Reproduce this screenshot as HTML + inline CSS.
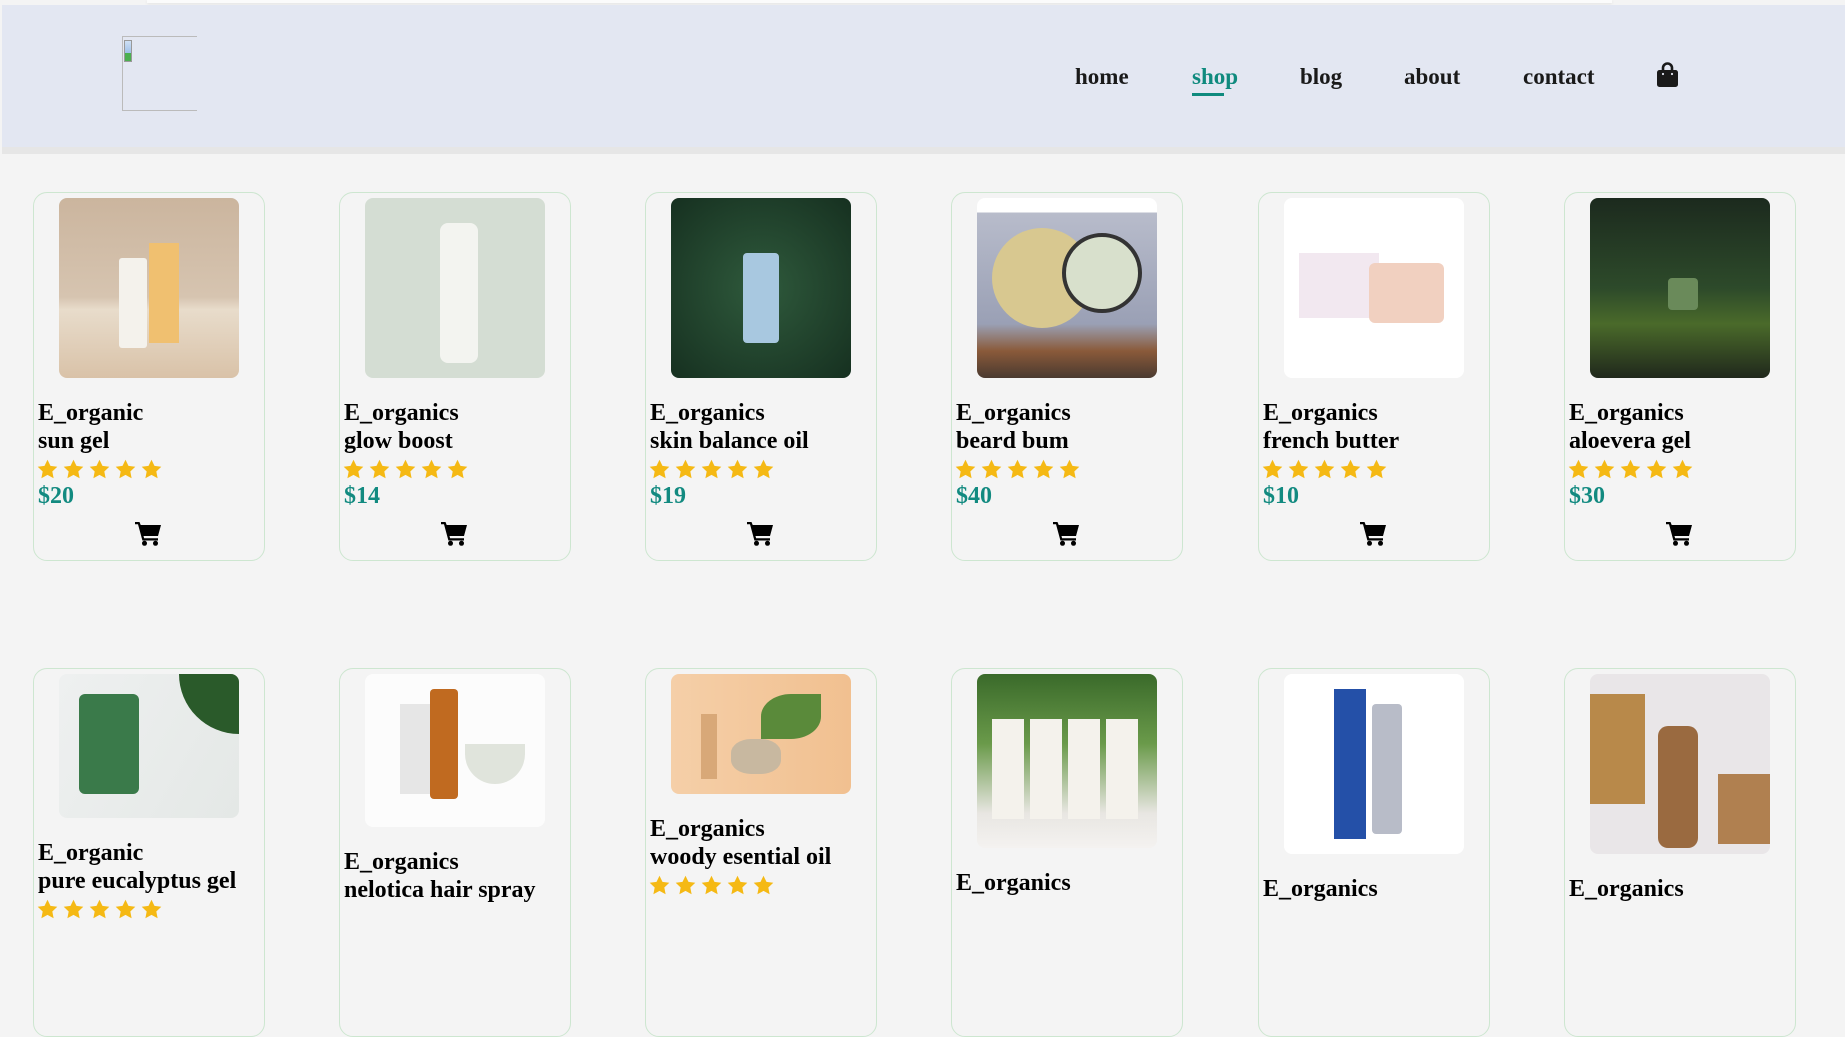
<!DOCTYPE html>
<html><head><meta charset="utf-8"><style>
*{box-sizing:border-box;margin:0;padding:0}
body{width:1845px;height:899px;overflow:hidden;background:#f4f4f4;font-family:"Liberation Serif",serif;position:relative}
.topbar{position:absolute;left:147px;top:0;width:1465px;height:3px;background:#fbfbfb;box-shadow:0 1px 3px rgba(0,0,0,.08)}
header{position:absolute;left:2px;top:5px;width:1843px;height:142px;background:#e3e7f2}
.strip{position:absolute;left:2px;top:147px;width:1843px;height:7px;background:#e6e6e6}
.logo{position:absolute;left:122px;top:36px;width:75px;height:75px;border:1px solid #bbb;border-right:none}
.logo i{position:absolute;left:1px;top:3px;width:8px;height:22px;background:linear-gradient(#cfe0f5,#9fc0e8 60%,#4caf50 60%);border:1px solid #999}
nav a{position:absolute;top:63px;font-size:23px;font-weight:bold;color:#1a1a1a;text-decoration:none;line-height:28px}
nav a.act{color:#0f8a7e}
.ul{position:absolute;left:1192px;top:93px;width:32px;height:3px;background:#0f8a7e}
.card{position:absolute;width:232px;height:369px;border:1px solid #cde6d0;border-radius:14px;padding:5px 0 0 4px}
.img{width:180px;margin-left:21px;border-radius:8px;margin-bottom:22px}
.t{font-size:24px;font-weight:bold;line-height:27.6px;color:#000}
.stars{height:28px;display:flex;align-items:center;gap:5px;margin-left:-1px}
.p{font-size:24px;font-weight:bold;line-height:27.6px;color:#128a80}
.cart{position:absolute;left:101px;top:328px}
</style></head><body>
<div class="topbar"></div>
<header></header><div class="strip"></div>
<div class="logo"><i></i></div>
<nav>
<a style="left:1075px">home</a>
<a class="act" style="left:1192px">shop</a>
<a style="left:1300px">blog</a>
<a style="left:1404px">about</a>
<a style="left:1523px">contact</a>
</nav>
<div class="ul"></div>
<svg style="position:absolute;left:1657px;top:62px" width="21" height="25" viewBox="0 0 21 25"><path d="M6 9V6a4.5 4.5 0 0 1 9 0v3" fill="none" stroke="#1a1a1a" stroke-width="2.6"/><rect x="0" y="8" width="21" height="17" rx="2.5" fill="#1a1a1a"/><circle cx="6" cy="12" r="1.1" fill="#e3e7f2"/><circle cx="15" cy="12" r="1.1" fill="#e3e7f2"/></svg>

<svg width="0" height="0" style="position:absolute"><defs>
<symbol id="st" viewBox="0 0 24 24"><path d="M12 0.8l3.4 7.1 7.8 1-5.7 5.4 1.5 7.7L12 18.2l-7 3.8 1.5-7.7L0.8 8.9l7.8-1z" fill="#f5b914"/></symbol>
<symbol id="ct" viewBox="0 0 26 25"><path d="M0 1h4.5l1.2 3H26l-3 11H8.5l.6 2.2H23v2.3H7.4L3 3.3H0z" fill="#000"/><circle cx="9.5" cy="22.3" r="2.5" fill="#000"/><circle cx="20.5" cy="22.3" r="2.5" fill="#000"/></symbol>
</defs></svg>

<!-- row 1 -->
<div class="card" style="left:33px;top:192px"><div class="img" style="height:180px;background:linear-gradient(#cbb59e 0%,#d6c4b0 55%,#e8dccb 62%,#d9c2a8 100%);position:relative"><div style="position:absolute;left:60px;top:60px;width:28px;height:90px;background:#f4f2ec;border-radius:3px"></div><div style="position:absolute;left:90px;top:45px;width:30px;height:100px;background:#f0c070"></div></div><div class="t">E_organic<br>sun gel</div><div class="stars"><svg width="21" height="21"><use href="#st"/></svg><svg width="21" height="21"><use href="#st"/></svg><svg width="21" height="21"><use href="#st"/></svg><svg width="21" height="21"><use href="#st"/></svg><svg width="21" height="21"><use href="#st"/></svg></div><div class="p">$20</div><svg class="cart" width="26" height="25"><use href="#ct"/></svg></div>

<div class="card" style="left:339px;top:192px"><div class="img" style="height:180px;background:#d4ddd3;position:relative"><div style="position:absolute;left:75px;top:25px;width:38px;height:140px;background:#f3f4f0;border-radius:8px"></div></div><div class="t">E_organics<br>glow boost</div><div class="stars"><svg width="21" height="21"><use href="#st"/></svg><svg width="21" height="21"><use href="#st"/></svg><svg width="21" height="21"><use href="#st"/></svg><svg width="21" height="21"><use href="#st"/></svg><svg width="21" height="21"><use href="#st"/></svg></div><div class="p">$14</div><svg class="cart" width="26" height="25"><use href="#ct"/></svg></div>

<div class="card" style="left:645px;top:192px"><div class="img" style="height:180px;background:radial-gradient(circle at 50% 50%,#2f5a3c,#163020);position:relative"><div style="position:absolute;left:72px;top:55px;width:36px;height:90px;background:#a8c8e0;border-radius:4px"></div></div><div class="t">E_organics<br>skin balance oil</div><div class="stars"><svg width="21" height="21"><use href="#st"/></svg><svg width="21" height="21"><use href="#st"/></svg><svg width="21" height="21"><use href="#st"/></svg><svg width="21" height="21"><use href="#st"/></svg><svg width="21" height="21"><use href="#st"/></svg></div><div class="p">$19</div><svg class="cart" width="26" height="25"><use href="#ct"/></svg></div>

<div class="card" style="left:951px;top:192px"><div class="img" style="height:180px;background:linear-gradient(#fff 0%,#fff 8%,#b8bccb 8%,#9aa0b5 70%,#8a5a3a 85%,#4a3a30 100%);position:relative"><div style="position:absolute;left:15px;top:30px;width:100px;height:100px;background:#d8c890;border-radius:50%"></div><div style="position:absolute;left:85px;top:35px;width:80px;height:80px;background:#d8e0cc;border-radius:50%;border:4px solid #333"></div></div><div class="t">E_organics<br>beard bum</div><div class="stars"><svg width="21" height="21"><use href="#st"/></svg><svg width="21" height="21"><use href="#st"/></svg><svg width="21" height="21"><use href="#st"/></svg><svg width="21" height="21"><use href="#st"/></svg><svg width="21" height="21"><use href="#st"/></svg></div><div class="p">$40</div><svg class="cart" width="26" height="25"><use href="#ct"/></svg></div>

<div class="card" style="left:1258px;top:192px"><div class="img" style="height:180px;background:#fff;position:relative"><div style="position:absolute;left:15px;top:55px;width:80px;height:65px;background:#f2e8f0"></div><div style="position:absolute;left:85px;top:65px;width:75px;height:60px;background:#f1d0c0;border-radius:6px"></div></div><div class="t">E_organics<br>french butter</div><div class="stars"><svg width="21" height="21"><use href="#st"/></svg><svg width="21" height="21"><use href="#st"/></svg><svg width="21" height="21"><use href="#st"/></svg><svg width="21" height="21"><use href="#st"/></svg><svg width="21" height="21"><use href="#st"/></svg></div><div class="p">$10</div><svg class="cart" width="26" height="25"><use href="#ct"/></svg></div>

<div class="card" style="left:1564px;top:192px"><div class="img" style="height:180px;background:linear-gradient(#1c2a1e,#2d4a2a 50%,#4a6a2a 70%,#20281c);position:relative"><div style="position:absolute;left:78px;top:80px;width:30px;height:32px;background:#6a8a5a;border-radius:4px"></div></div><div class="t">E_organics<br>aloevera gel</div><div class="stars"><svg width="21" height="21"><use href="#st"/></svg><svg width="21" height="21"><use href="#st"/></svg><svg width="21" height="21"><use href="#st"/></svg><svg width="21" height="21"><use href="#st"/></svg><svg width="21" height="21"><use href="#st"/></svg></div><div class="p">$30</div><svg class="cart" width="26" height="25"><use href="#ct"/></svg></div>

<!-- row 2 -->
<div class="card" style="left:33px;top:668px"><div class="img" style="height:144px;background:linear-gradient(120deg,#eef0f0,#e4e8e6);position:relative"><div style="position:absolute;left:20px;top:20px;width:60px;height:100px;background:#3a7a4a;border-radius:6px"></div><div style="position:absolute;left:120px;top:0;width:60px;height:60px;background:#2a5a2a;border-radius:0 8px 0 60px"></div></div><div class="t">E_organic<br>pure eucalyptus gel</div><div class="stars"><svg width="21" height="21"><use href="#st"/></svg><svg width="21" height="21"><use href="#st"/></svg><svg width="21" height="21"><use href="#st"/></svg><svg width="21" height="21"><use href="#st"/></svg><svg width="21" height="21"><use href="#st"/></svg></div></div>

<div class="card" style="left:339px;top:668px"><div class="img" style="height:153px;background:#fcfcfc;position:relative"><div style="position:absolute;left:35px;top:30px;width:30px;height:90px;background:#e6e6e6"></div><div style="position:absolute;left:65px;top:15px;width:28px;height:110px;background:#c06a20;border-radius:4px"></div><div style="position:absolute;left:100px;top:70px;width:60px;height:40px;background:#e0e4dc;border-radius:0 0 30px 30px"></div></div><div class="t">E_organics<br>nelotica hair spray</div></div>

<div class="card" style="left:645px;top:668px"><div class="img" style="height:120px;background:linear-gradient(90deg,#f5cfa8,#f1c090);position:relative"><div style="position:absolute;left:30px;top:40px;width:16px;height:65px;background:#d8a878"></div><div style="position:absolute;left:60px;top:65px;width:50px;height:35px;background:#c8b8a0;border-radius:40%"></div><div style="position:absolute;left:90px;top:20px;width:60px;height:45px;background:#5a8a3a;border-radius:50% 0"></div></div><div class="t">E_organics<br>woody esential oil</div><div class="stars"><svg width="21" height="21"><use href="#st"/></svg><svg width="21" height="21"><use href="#st"/></svg><svg width="21" height="21"><use href="#st"/></svg><svg width="21" height="21"><use href="#st"/></svg><svg width="21" height="21"><use href="#st"/></svg></div></div>

<div class="card" style="left:951px;top:668px"><div class="img" style="height:174px;background:linear-gradient(#3a6a2a,#6a9a4a 40%,#e8e6e2 80%,#f4f2f0);position:relative"><div style="position:absolute;left:15px;top:45px;width:150px;height:100px;background:repeating-linear-gradient(90deg,#f4f2ec 0 32px,transparent 32px 38px)"></div></div><div class="t">E_organics</div></div>

<div class="card" style="left:1258px;top:668px"><div class="img" style="height:180px;background:#fff;position:relative"><div style="position:absolute;left:50px;top:15px;width:32px;height:150px;background:#2450a8"></div><div style="position:absolute;left:88px;top:30px;width:30px;height:130px;background:#b8bcc8;border-radius:4px"></div></div><div class="t">E_organics</div></div>

<div class="card" style="left:1564px;top:668px"><div class="img" style="height:180px;background:#e9e6e8;position:relative"><div style="position:absolute;left:0;top:20px;width:55px;height:110px;background:#b8894a"></div><div style="position:absolute;left:68px;top:52px;width:40px;height:122px;background:#9a6a40;border-radius:10px"></div><div style="position:absolute;left:128px;top:100px;width:52px;height:70px;background:#b08050"></div></div><div class="t">E_organics</div></div>
</body></html>
